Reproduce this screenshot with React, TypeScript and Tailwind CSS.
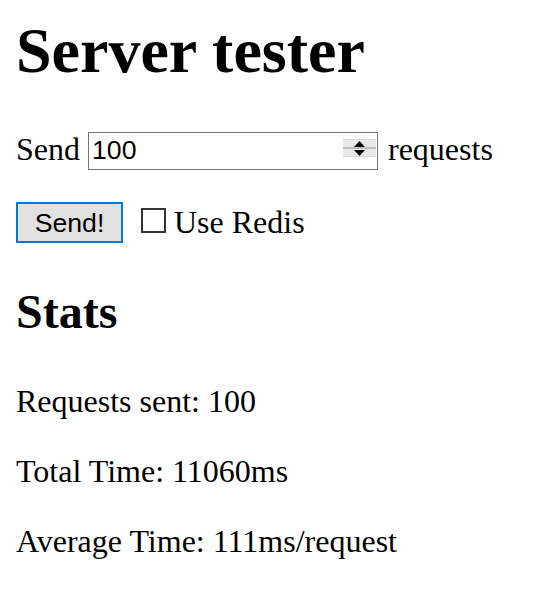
import { useState } from 'react';

const stats = [
  { label: 'Requests sent', value: '100' },
  { label: 'Total Time', value: '11060ms' },
  { label: 'Average Time', value: '111ms/request' },
];

function Spinner() {
  return (
    <div className="absolute right-[2px] top-[9px] flex h-[18px] w-[33px] flex-col">
      {/* up button */}
      <div className="flex h-[8px] items-center justify-center border-t border-[#dadada] bg-[#e9e9e9]">
        <svg width="11" height="6" viewBox="0 0 11 6">
          <path d="M0 6L5.5 0L11 6Z" fill="#000" />
        </svg>
      </div>
      <div className="h-[2px] bg-[#bdbdbd]" />
      {/* down button */}
      <div className="flex h-[8px] items-center justify-center border-b border-[#dadada] bg-[#e9e9e9]">
        <svg width="11" height="6" viewBox="0 0 11 6">
          <path d="M0 0L5.5 6L11 0Z" fill="#000" />
        </svg>
      </div>
    </div>
  );
}

export default function App() {
  const [count, setCount] = useState('100');
  const [useRedis, setUseRedis] = useState(false);

  return (
    <div className="min-h-screen bg-white px-4 pt-[14px] font-['Liberation_Serif',serif] text-black">
      <h1 className="text-[64px] font-bold leading-[74px]">Server tester</h1>

      {/* request count */}
      <div className="mt-[42px] flex items-center text-[32px] leading-[37px]">
        <span>Send</span>
        <div className="relative ml-[8px] h-[38px] w-[290px]">
          <input
            type="text"
            value={count}
            onChange={(e) => setCount(e.target.value)}
            className="h-full w-full border border-[#767676] bg-white pl-[3px] font-['Liberation_Sans',sans-serif] text-[26.67px] leading-[30px] text-black outline-none"
          />
          <Spinner />
        </div>
        <span className="ml-[10px]">requests</span>
      </div>

      {/* actions */}
      <div className="mt-[34px] flex items-center">
        <button className="h-[41px] w-[107px] border-2 border-[#0078d7] bg-[#e1e1e1] font-['Liberation_Sans',sans-serif] text-[26.67px] leading-[30px] text-black">
          Send!
        </button>
        <label className="ml-[18px] flex items-center text-[32px] leading-[37px]">
          <span
            onClick={() => setUseRedis(!useRedis)}
            className="mb-[5px] flex h-[25px] w-[25px] items-center justify-center border-2 border-[#333333] bg-white"
          >
            {useRedis && (
              <svg width="17" height="17" viewBox="0 0 17 17">
                <path d="M2 9l4 4l9-10" stroke="#000" strokeWidth="2.5" fill="none" />
              </svg>
            )}
          </span>
          <span className="ml-[8px]">Use Redis</span>
        </label>
      </div>

      <h2 className="mt-[41px] text-[48px] font-bold leading-[55px]">Stats</h2>

      <div className="mt-[44px] flex flex-col gap-[33px] text-[32px] leading-[37px]">
        {stats.map((s) => (
          <p key={s.label}>
            {s.label}: {s.value}
          </p>
        ))}
      </div>
    </div>
  );
}
